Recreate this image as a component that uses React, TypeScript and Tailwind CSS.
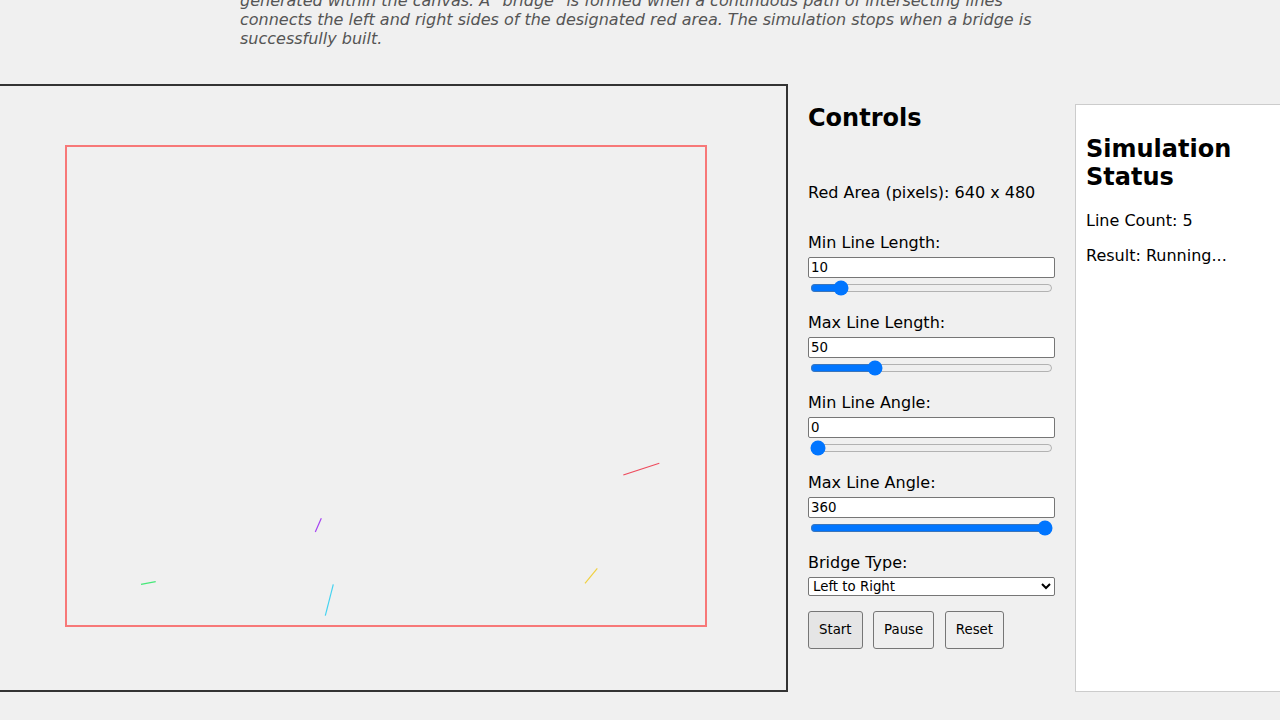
import { useState } from "react";

type Seg = { x1: number; y1: number; x2: number; y2: number; color: string };

// lines already dropped on the canvas (canvas coords, 800x600)
const SEGMENTS: Seg[] = [
  { x1: 637.3, y1: 389, x2: 673.3, y2: 377.3, color: "#ee4a5c" },
  { x1: 599, y1: 497.3, x2: 611.3, y2: 482.3, color: "#f0d040" },
  { x1: 329.3, y1: 446, x2: 335.3, y2: 432.3, color: "#a542f2" },
  { x1: 155, y1: 498.3, x2: 169.7, y2: 495.7, color: "#45e878" },
  { x1: 339.3, y1: 529.7, x2: 347.3, y2: 498.3, color: "#45d2f0" },
];

function SimCanvas() {
  return (
    <div className="shrink-0 border-2 border-[#333] w-[804px] h-[608px]">
      <svg width={800} height={600} viewBox="0 0 800 600" className="block">
        <rect x={80} y={60} width={640} height={480} fill="none" stroke="#f77878" strokeWidth={2} />
        {SEGMENTS.map((s, i) => (
          <line key={i} x1={s.x1} y1={s.y1} x2={s.x2} y2={s.y2} stroke={s.color} strokeWidth={1.2} />
        ))}
      </svg>
    </div>
  );
}

function RangeField({
  label,
  value,
  min,
  max,
  onChange,
}: {
  label: string;
  value: number;
  min: number;
  max: number;
  onChange: (v: number) => void;
}) {
  return (
    <div className="mb-[17px]">
      <label className="block mb-[5px]">{label}</label>
      <input
        type="text"
        value={value}
        onChange={(e) => onChange(Number(e.target.value) || 0)}
        className="block w-full h-[21px] px-[2px] bg-white border border-[#767676] rounded-[2px] text-[13.33px] leading-[15px] outline-none"
      />
      <input
        type="range"
        min={min}
        max={max}
        value={value}
        onChange={(e) => onChange(Number(e.target.value))}
        className="block w-[calc(100%-4px)] h-4 mt-[2px] mx-[2px]"
      />
    </div>
  );
}

function Controls() {
  const [minLen, setMinLen] = useState(10);
  const [maxLen, setMaxLen] = useState(50);
  const [minAngle, setMinAngle] = useState(0);
  const [maxAngle, setMaxAngle] = useState(360);

  const btn =
    "h-[38px] px-[10px] border border-[#767676] rounded-[3px] text-[13.33px] leading-[16px] text-black";

  return (
    <div className="shrink-0 w-[287px] px-5">
      <h2 className="mt-[19.92px] text-[24px] font-bold leading-[28px]">Controls</h2>
      <p className="mt-[50.6px]">Red Area (pixels): 640 x 480</p>
      <div className="mt-[31.7px]">
        <RangeField label="Min Line Length:" value={minLen} min={0} max={100} onChange={setMinLen} />
        <RangeField label="Max Line Length:" value={maxLen} min={0} max={200} onChange={setMaxLen} />
        <RangeField label="Min Line Angle:" value={minAngle} min={0} max={360} onChange={setMinAngle} />
        <RangeField label="Max Line Angle:" value={maxAngle} min={0} max={360} onChange={setMaxAngle} />
      </div>
      <label className="block mb-[5px]">Bridge Type:</label>
      <select className="block w-full h-[19px] bg-white border border-[#767676] rounded-[2px] text-[13.33px]">
        <option>Left to Right</option>
        <option>Top to Bottom</option>
      </select>
      <div className="flex gap-[10.5px] mt-[15px]">
        <button className={`${btn} bg-[#e5e5e5]`}>Start</button>
        <button className={`${btn} bg-[#efefef]`}>Pause</button>
        <button className={`${btn} bg-[#efefef]`}>Reset</button>
      </div>
    </div>
  );
}

function StatusPanel() {
  return (
    <div className="shrink-0 w-[221px] mt-5 bg-white border border-[#ccc] p-[10px]">
      <h2 className="my-[19.92px] text-[24px] font-bold leading-[28px]">Simulation Status</h2>
      <p className="my-4">Line Count: 5</p>
      <p className="my-4">Result: Running...</p>
    </div>
  );
}

export default function App() {
  return (
    <div className="h-screen overflow-hidden bg-[#f0f0f0] text-black text-[16px] leading-[normal] font-['DejaVu_Sans',sans-serif]">
      <p className="w-[800px] mx-auto -mt-[9.5px] mb-[36.7px] italic text-[#555]">
        generated within the canvas. A "bridge" is formed when a continuous path of intersecting lines connects the
        left and right sides of the designated red area. The simulation stops when a bridge is successfully built.
      </p>
      <div className="flex justify-center items-stretch w-full">
        <SimCanvas />
        <Controls />
        <StatusPanel />
      </div>
    </div>
  );
}
